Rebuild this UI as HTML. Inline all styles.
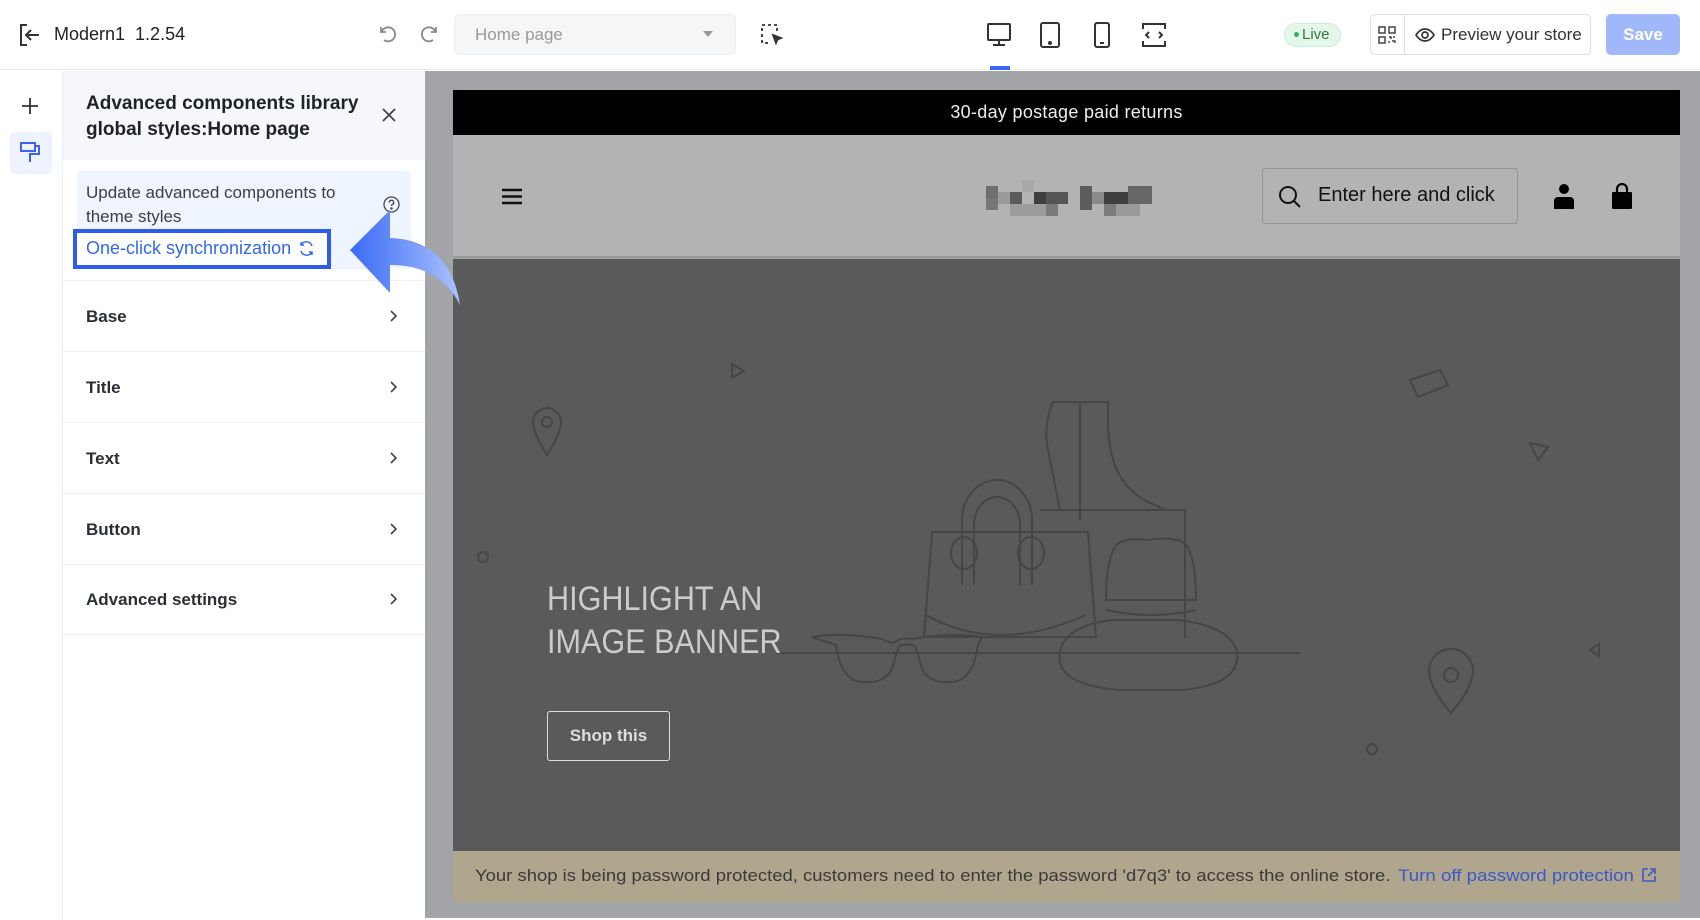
<!DOCTYPE html>
<html><head><meta charset="utf-8"><style>
*{box-sizing:border-box;margin:0;padding:0}
body{width:1700px;height:920px;overflow:hidden;background:#fff;font-family:"Liberation Sans",sans-serif;position:relative;color:#1f2329}
.a{position:absolute}
.hdr{left:0;top:0;width:1700px;height:70px;background:#fff;border-bottom:1px solid #e8e9ec}
.row{position:absolute;left:63px;width:362px;height:71px;border-bottom:1px solid #eef0f3;font-size:17px;font-weight:bold;color:#2a2e35}
.row span{position:absolute;left:23px;top:26px}
.row svg{position:absolute;right:28px;top:29px}
</style></head><body>
<div class="a hdr"></div>
<svg class="a" style="left:19px;top:23px" width="22" height="24" viewBox="0 0 22 24" fill="none" stroke="#333" stroke-width="2"><path d="M8 2H2v20h6M20 12H7M12 7l-5 5 5 5"/></svg>
<div class="a" style="left:54px;top:24px;font-size:18px;color:#222">Modern1&nbsp; 1.2.54</div>
<svg class="a" style="left:378px;top:24px" width="20" height="20" viewBox="0 0 20 20" fill="none" stroke="#888" stroke-width="1.8"><path d="M3 3v5h5M3.5 8A7 7 0 1 1 6 16"/></svg>
<svg class="a" style="left:419px;top:24px" width="20" height="20" viewBox="0 0 20 20" fill="none" stroke="#888" stroke-width="1.8"><path d="M17 3v5h-5M16.5 8A7 7 0 1 0 14 16"/></svg>
<div class="a" style="left:454px;top:14px;width:282px;height:41px;background:#f5f6f7;border:1px solid #eceef0;border-radius:6px"></div>
<div class="a" style="left:475px;top:25px;font-size:17px;color:#999">Home page</div>
<div class="a" style="left:703px;top:31px;width:0;height:0;border-left:5px solid transparent;border-right:5px solid transparent;border-top:6px solid #999"></div>
<svg class="a" style="left:760px;top:23px" width="24" height="24" viewBox="0 0 24 24" fill="none" stroke="#333" stroke-width="1.8"><path d="M2 2h3M8 2h3M14 2h3M2 5v3M2 11v3M17 5v3M2 17v3M5 20h3" /><path d="M13 12l8 3-3.5 1.5L16 20z" fill="#333"/></svg>
<svg class="a" style="left:986px;top:22px" width="26" height="26" viewBox="0 0 26 26" fill="none" stroke="#333" stroke-width="2"><rect x="2" y="2" width="22" height="16" rx="1"/><path d="M13 18v4M7 23h12"/></svg>
<div class="a" style="left:990px;top:66px;width:20px;height:4px;background:#3b64f0"></div>
<svg class="a" style="left:1039px;top:22px" width="22" height="26" viewBox="0 0 22 26" fill="none" stroke="#333" stroke-width="2"><rect x="2" y="1" width="18" height="24" rx="2"/><circle cx="11" cy="21" r="1" fill="#333"/></svg>
<svg class="a" style="left:1093px;top:22px" width="18" height="26" viewBox="0 0 18 26" fill="none" stroke="#333" stroke-width="2"><rect x="2" y="1" width="14" height="24" rx="2"/><path d="M7 21h4"/></svg>
<svg class="a" style="left:1141px;top:22px" width="26" height="26" viewBox="0 0 26 26" fill="none" stroke="#333" stroke-width="2"><path d="M2 7V2h22v5M2 19v5h22v-5M8 10l-3 3 3 3M18 10l3 3-3 3"/></svg>
<div class="a" style="left:1284px;top:23px;width:57px;height:24px;background:#e5f7ea;border:1px solid #c8eed3;border-radius:12px;font-size:15px;color:#2a7a3e;line-height:22px;padding-left:17px">Live</div>
<div class="a" style="left:1294px;top:32px;width:5px;height:5px;border-radius:50%;background:#34b35a"></div>
<div class="a" style="left:1370px;top:14px;width:221px;height:41px;border:1px solid #dcdfe3;border-radius:5px"></div>
<div class="a" style="left:1404px;top:14px;width:1px;height:41px;background:#dcdfe3"></div>
<svg class="a" style="left:1378px;top:26px" width="18" height="18" viewBox="0 0 18 18" fill="none" stroke="#444" stroke-width="1.5"><rect x="1" y="1" width="6" height="6"/><rect x="11" y="1" width="6" height="6"/><rect x="1" y="11" width="6" height="6"/><path d="M11 11h2v2M15 11h2M11 15v2M14 15h3v2"/></svg>
<svg class="a" style="left:1415px;top:25px" width="20" height="20" viewBox="0 0 20 20" fill="none" stroke="#333" stroke-width="1.7"><path d="M1 10s3.5-6 9-6 9 6 9 6-3.5 6-9 6-9-6-9-6z"/><circle cx="10" cy="10" r="3"/></svg>
<div class="a" style="left:1441px;top:25px;font-size:17px;color:#333">Preview your store</div>
<div class="a" style="left:1606px;top:14px;width:74px;height:41px;background:#a0b8f9;border-radius:5px;color:#fff;font-size:17px;font-weight:bold;text-align:center;line-height:41px">Save</div>

<div class="a" style="left:62px;top:71px;width:1px;height:849px;background:#eceef1"></div>
<svg class="a" style="left:21px;top:97px" width="18" height="18" viewBox="0 0 18 18" stroke="#333" stroke-width="1.8"><path d="M9 1v16M1 9h16"/></svg>
<div class="a" style="left:10px;top:132px;width:42px;height:42px;background:#eef3ff;border-radius:4px"></div>
<svg class="a" style="left:19px;top:141px" width="24" height="24" viewBox="0 0 24 24" fill="none" stroke="#3b64f0" stroke-width="2"><path d="M2 2h14v8H2zM16 5h4v8h-9v8"/></svg>

<div class="a" style="left:63px;top:71px;width:362px;height:89px;background:#f5f7fb"></div>
<div class="a" style="left:86px;top:91px;font-size:19px;font-weight:bold;line-height:26px;color:#1f2329">Advanced components library<br>global styles:Home page</div>
<svg class="a" style="left:382px;top:108px" width="14" height="14" viewBox="0 0 14 14" stroke="#444" stroke-width="1.8"><path d="M1 1l12 12M13 1L1 13"/></svg>
<div class="a" style="left:77px;top:171px;width:334px;height:98px;background:#eff5ff;border-radius:4px"></div>
<div class="a" style="left:86px;top:181px;font-size:17px;line-height:24px;color:#3a3e45">Update advanced components to<br>theme styles</div>
<svg class="a" style="left:383px;top:196px" width="17" height="17" viewBox="0 0 17 17" fill="none" stroke="#444" stroke-width="1.3"><circle cx="8.5" cy="8.5" r="7.5"/><path d="M6.3 6.5a2.2 2.2 0 1 1 3 2c-.6.3-.8.7-.8 1.4"/><circle cx="8.5" cy="12.5" r=".6" fill="#444"/></svg>
<div class="a" style="left:73px;top:229px;width:258px;height:40px;border:4px solid #2f5bea;background:#fff"></div>
<div class="a" style="left:86px;top:238px;font-size:18px;color:#3168ee">One-click synchronization</div>
<svg class="a" style="left:298px;top:240px" width="17" height="17" viewBox="0 0 17 17" fill="none" stroke="#3168ee" stroke-width="1.4"><path d="M14 6A6 6 0 0 0 3 5M3 11a6 6 0 0 0 11 1M3 2v3h3M14 15v-3h-3"/></svg>
<div class="a" style="left:63px;top:280px;width:362px;height:1px;background:#eef0f3"></div>
<div class="row" style="top:281px"><span>Base</span><svg width="8" height="12" viewBox="0 0 8 12" fill="none" stroke="#444" stroke-width="1.6"><path d="M2 1l5 5-5 5"/></svg></div>
<div class="row" style="top:352px"><span>Title</span><svg width="8" height="12" viewBox="0 0 8 12" fill="none" stroke="#444" stroke-width="1.6"><path d="M2 1l5 5-5 5"/></svg></div>
<div class="row" style="top:423px"><span>Text</span><svg width="8" height="12" viewBox="0 0 8 12" fill="none" stroke="#444" stroke-width="1.6"><path d="M2 1l5 5-5 5"/></svg></div>
<div class="row" style="top:494px"><span>Button</span><svg width="8" height="12" viewBox="0 0 8 12" fill="none" stroke="#444" stroke-width="1.6"><path d="M2 1l5 5-5 5"/></svg></div>
<div class="row" style="top:564px"><span>Advanced settings</span><svg width="8" height="12" viewBox="0 0 8 12" fill="none" stroke="#444" stroke-width="1.6"><path d="M2 1l5 5-5 5"/></svg></div>

<div class="a" style="left:425px;top:71px;width:1275px;height:847px;background:#a3a4a7"></div>
<div class="a" style="left:453px;top:90px;width:1227px;height:45px;background:#000;color:#eee;font-size:18px;text-align:center;line-height:45px;letter-spacing:0.3px">30-day postage paid returns</div>
<div class="a" style="left:453px;top:135px;width:1227px;height:123px;background:#b3b3b3;border-bottom:2px solid #9a9a9a"></div>
<svg class="a" style="left:502px;top:188px" width="20" height="17" viewBox="0 0 20 17" stroke="#111" stroke-width="2.4"><path d="M0 2h20M0 8.5h20M0 15h20"/></svg>
<svg class="a" style="left:986px;top:180px" width="166" height="37" viewBox="0 0 166 37">
<rect x="0" y="6" width="12" height="12" fill="#6e6e6e"/><rect x="12" y="12" width="12" height="12" fill="#9a9a9a"/><rect x="24" y="12" width="12" height="12" fill="#5a5a5a"/><rect x="36" y="0" width="12" height="12" fill="#a8a8a8"/><rect x="48" y="12" width="12" height="12" fill="#3e3e3e"/><rect x="60" y="12" width="22" height="12" fill="#555"/><rect x="0" y="18" width="12" height="12" fill="#777"/><rect x="24" y="24" width="36" height="12" fill="#9c9c9c"/><rect x="60" y="24" width="12" height="12" fill="#7a7a7a"/><rect x="94" y="6" width="12" height="24" fill="#5c5c5c"/><rect x="106" y="12" width="12" height="12" fill="#8a8a8a"/><rect x="118" y="12" width="24" height="12" fill="#3f3f3f"/><rect x="142" y="6" width="24" height="18" fill="#666"/><rect x="118" y="24" width="12" height="12" fill="#7c7c7c"/><rect x="130" y="24" width="24" height="12" fill="#9a9a9a"/></svg>
<div class="a" style="left:1262px;top:168px;width:256px;height:56px;border:1px solid #959595;border-radius:4px"></div>
<svg class="a" style="left:1278px;top:185px" width="24" height="24" viewBox="0 0 24 24" fill="none" stroke="#111" stroke-width="2"><circle cx="10" cy="10" r="8"/><path d="M16 16l6 6"/></svg>
<div class="a" style="left:1318px;top:184px;font-size:20px;color:#111">Enter here and click</div>
<svg class="a" style="left:1553px;top:183px" width="22" height="26" viewBox="0 0 22 26" fill="#000"><circle cx="11" cy="6" r="5"/><path d="M1 26v-8a4 4 0 0 1 4-4h12a4 4 0 0 1 4 4v8z"/></svg>
<svg class="a" style="left:1612px;top:183px" width="20" height="26" viewBox="0 0 20 26"><path d="M5 9V6a5 5 0 0 1 10 0v3" fill="none" stroke="#000" stroke-width="2.2"/><rect x="0" y="9" width="20" height="17" rx="1" fill="#000"/></svg>
<div class="a" style="left:453px;top:259px;width:1227px;height:592px;background:#5a5a5a"></div>
<svg class="a" style="left:453px;top:259px" width="1227" height="592" viewBox="453 259 1227 592" fill="none" stroke="#464646" stroke-width="2">
<path d="M776 653H1300"/>
<path d="M932 532h156l8 105H924z"/><path d="M926 615q70 40 160 0"/>
<path d="M962 585V520a35 40 0 0 1 70 0v65M974 585v-60a23 28 0 0 1 46 0v60"/>
<ellipse cx="964" cy="553" rx="13" ry="16"/><ellipse cx="1031" cy="553" rx="13" ry="16"/>
<path d="M1040 510h145v128"/>
<path d="M1053 402h55v20q0 60 40 80l18 8h-106l-12-60q-5-25 5-48z"/><path d="M1080 402v118"/>
<path d="M1062 645q-15 40 60 45h60q60-5 55-40q-10-25-60-30h-65q-40 5-50 25"/><path d="M1106 600q0-40 10-55q10-8 30-5q20-3 30 0q20 0 20 60z"/><path d="M1106 610q45 10 90 0"/>
<path d="M812 637q30-5 70 2q10 6 15 2 5-4 15-2 40-7 70-2l-4 8q-4 30-20 36q-25 5-35-10l-8-25q-8-3-16 0l-8 25q-10 15-35 10q-16-6-20-36z"/>
<path d="M547 455q-14-22-14-33a14 14 0 0 1 28 0q0 11-14 33z"/><circle cx="547" cy="422" r="5"/>
<path d="M732 364l12 7-12 7z"/>
<path d="M1410 380l30-10 8 15-30 12z"/><path d="M1530 443l18 4-10 13z"/>
<circle cx="483" cy="557" r="5"/><circle cx="1372" cy="749" r="5"/>
<path d="M1451 713q-22-26-22-42a22 22 0 0 1 44 0q0 16-22 42z"/><circle cx="1451" cy="675" r="7"/>
<path d="M1590 650l9-6v12z"/>
</svg>
<div class="a" style="left:547px;top:578px;font-family:'Liberation Sans Narrow','Liberation Sans',sans-serif;font-size:34px;line-height:43px;color:#cbcbcb;transform:scaleX(0.9);transform-origin:left">HIGHLIGHT AN<br>IMAGE BANNER</div>
<div class="a" style="left:547px;top:711px;width:123px;height:50px;border:1px solid #ddd;border-radius:3px;color:#ddd;font-size:17px;font-weight:bold;text-align:center;line-height:48px">Shop this</div>
<div class="a" style="left:453px;top:851px;width:1227px;height:51px;background:#b0a68e"></div>
<div class="a" style="left:475px;top:866px;font-size:17px;color:#3a3a3a;transform:scaleX(1.087);transform-origin:left;white-space:nowrap">Your shop is being password protected, customers need to enter the password 'd7q3' to access the online store.</div>
<div class="a" style="left:1398px;top:866px;font-size:17px;color:#3b58c9;transform:scaleX(1.1);transform-origin:left;white-space:nowrap">Turn off password protection</div>
<svg class="a" style="left:1641px;top:867px" width="16" height="16" viewBox="0 0 16 16" fill="none" stroke="#3b58c9" stroke-width="1.6"><path d="M7 2H2v12h12V9M9 2h5v5M14 2L7 9"/></svg>

<svg class="a" style="left:345px;top:210px" width="120" height="100" viewBox="345 210 120 100">
<defs><linearGradient id="g" x1="0" x2="1"><stop offset="0" stop-color="#3b6af5"/><stop offset="1" stop-color="#a9c2ff"/></linearGradient></defs>
<path d="M350 250L390 210V238Q450 240 460 305Q440 265 390 265V293z" fill="url(#g)"/>
</svg>
</body></html>
